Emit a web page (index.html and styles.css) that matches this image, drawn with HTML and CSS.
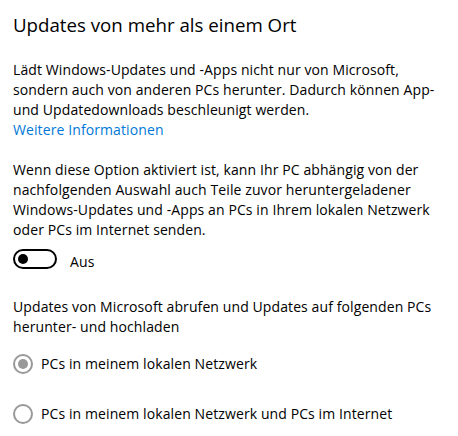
FILE: index.html
```html
<!DOCTYPE html>
<html lang="de">
<head>
<meta charset="utf-8">
<title>Übermittlungsoptimierung</title>
<link rel="stylesheet" href="styles.css">
</head>
<body>
<main class="page">
  <h1 class="title">Updates von mehr als einem Ort</h1>
  <p class="text intro">Lädt Windows-Updates und -Apps nicht nur von Microsoft, sondern auch von anderen PCs herunter. Dadurch können App- und Updatedownloads beschleunigt werden.<br><a class="link" href="#">Weitere Informationen</a></p>
  <p class="text desc">Wenn diese Option aktiviert ist, kann Ihr PC abhängig von der nachfolgenden Auswahl auch Teile zuvor heruntergeladener Windows-Updates und -Apps an PCs in Ihrem lokalen Netzwerk oder PCs im Internet senden.</p>
  <div class="toggle-row">
    <span class="toggle"><span class="knob"></span></span>
    <span class="toggle-label">Aus</span>
  </div>
  <p class="text choose">Updates von Microsoft abrufen und Updates auf folgenden PCs herunter- und hochladen</p>
  <div class="radios">
    <div class="radio-row">
      <span class="radio checked"><span class="dot"></span></span>
      <span class="radio-label">PCs in meinem lokalen Netzwerk</span>
    </div>
    <div class="radio-row">
      <span class="radio"></span>
      <span class="radio-label">PCs in meinem lokalen Netzwerk und PCs im Internet</span>
    </div>
  </div>
</main>
</body>
</html>
```

FILE: styles.css
```css
html, body {
  margin: 0;
  padding: 0;
  background: #fff;
}
body {
  font-family: "Open Sans", "Noto Sans", sans-serif;
  color: #000;
}
.page {
  padding: 11px 0 0 13px;
  width: 432px;
  display: flex;
  flex-direction: column;
  align-items: flex-start;
}
.title {
  margin: 0;
  font-size: 18.7px;
  font-weight: 400;
  line-height: 28px;
}
.text {
  margin: 0;
  font-size: 14px;
  line-height: 20px;
  letter-spacing: 0.1px;
}
.intro { margin-top: 21px; }
.desc { margin-top: 20px; }
.link {
  color: #0078d7;
  text-decoration: none;
}
.toggle-row {
  margin-top: 9px;
  display: flex;
  align-items: flex-start;
  gap: 13px;
}
.toggle {
  box-sizing: border-box;
  width: 44px;
  height: 20px;
  border: 2px solid #000;
  border-radius: 10px;
  display: flex;
  align-items: center;
  padding-left: 3px;
}
.knob {
  width: 10px;
  height: 10px;
  border-radius: 50%;
  background: #000;
}
.toggle-label {
  font-size: 14px;
  line-height: 20px;
  margin-top: 3px;
  letter-spacing: 0.1px;
}
.choose { margin-top: 25px; }
.radios {
  margin-top: 17px;
  display: flex;
  flex-direction: column;
  gap: 30px;
}
.radio-row {
  display: flex;
  align-items: center;
  gap: 8px;
  height: 20px;
}
.radio {
  box-sizing: border-box;
  width: 20px;
  height: 20px;
  border: 2px solid #999;
  border-radius: 50%;
  display: flex;
  align-items: center;
  justify-content: center;
}
.dot {
  width: 10px;
  height: 10px;
  border-radius: 50%;
  background: #999;
}
.radio-label {
  font-size: 14px;
  line-height: 20px;
  margin-top: 0;
  letter-spacing: 0.1px;
}
```
